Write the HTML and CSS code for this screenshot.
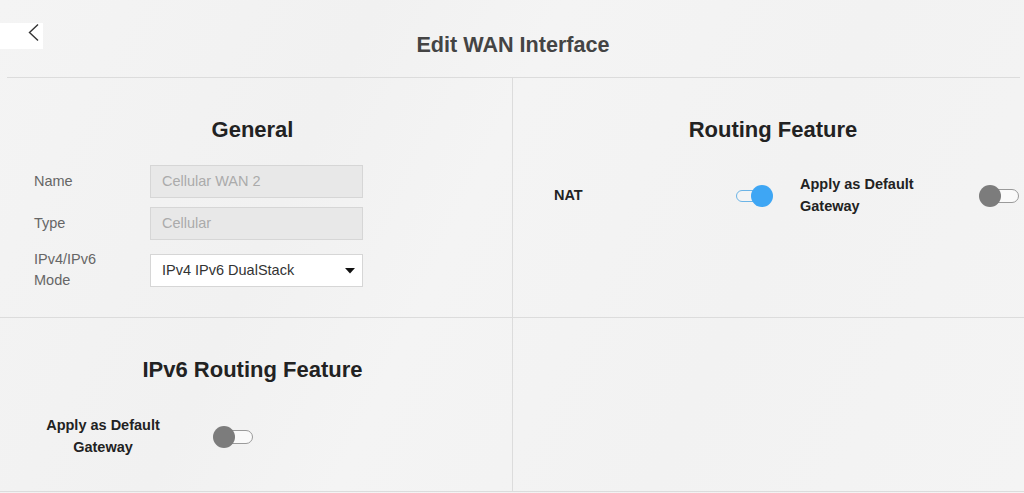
FILE: index.html
```html
<!DOCTYPE html>
<html lang="en">
<head>
<meta charset="utf-8">
<title>Edit WAN Interface</title>
<link rel="stylesheet" href="styles.css">
</head>
<body>
<div class="page">
  <header class="topbar">
    <div class="back">
      <svg width="43" height="26" viewBox="0 0 43 26"><polyline points="38,1.5 29.5,9.5 38,17.5" fill="none" stroke="#333" stroke-width="1.4"/></svg>
    </div>
    <h1 class="title">Edit WAN Interface</h1>
    <div></div>
  </header>
  <div class="rule"></div>
  <main class="panels">
    <section class="cell cell-general">
      <h2 class="heading heading-left">General</h2>
      <div class="form">
        <label class="flabel">Name</label>
        <div class="field disabled">Cellular WAN 2</div>
        <label class="flabel">Type</label>
        <div class="field disabled">Cellular</div>
        <label class="flabel">IPv4/IPv6<br>Mode</label>
        <div class="field select">
          <span>IPv4 IPv6 DualStack</span>
          <svg width="10" height="6" viewBox="0 0 10 6"><polygon points="0,0 10,0 5,5.5" fill="#111"/></svg>
        </div>
      </div>
    </section>
    <section class="cell cell-routing">
      <h2 class="heading heading-right">Routing Feature</h2>
      <div class="route-row">
        <span class="blabel nat">NAT</span>
        <div class="switch on"><span class="track"></span><span class="knob"></span></div>
        <span class="blabel gw">Apply as Default<br>Gateway</span>
        <div class="switch off"><span class="track"></span><span class="knob"></span></div>
      </div>
    </section>
    <section class="cell cell-ipv6">
      <h2 class="heading heading-left">IPv6 Routing Feature</h2>
      <div class="ipv6-row">
        <span class="blabel centered">Apply as Default<br>Gateway</span>
        <div class="switch off"><span class="track"></span><span class="knob"></span></div>
      </div>
    </section>
    <section class="cell cell-empty"></section>
  </main>
</div>
</body>
</html>
```
FILE: styles.css
```css
* { box-sizing: border-box; }
html, body { margin: 0; padding: 0; }
body {
  width: 1024px;
  height: 493px;
  overflow: hidden;
  font-family: "Liberation Sans", Arial, sans-serif;
  background: #f3f3f3;
  color: #222;
}
.page {
  width: 1024px;
  height: 493px;
  background: linear-gradient(115deg, #f4f4f4 0%, #f1f1f1 30%, #f4f4f4 45%, #f2f2f2 70%, #f4f4f4 100%);
}
.topbar {
  height: 77px;
  display: grid;
  grid-template-columns: 1fr auto 1fr;
}
.back {
  width: 43px;
  height: 26px;
  margin-top: 23px;
  background: #fff;
}
.back svg { display: block; }
.title {
  margin: 0;
  padding-top: 33px;
  padding-left: 2px;
  font-size: 21.6px;
  line-height: 24px;
  font-weight: bold;
  color: #444;
}
.rule {
  height: 1px;
  background: #dcdcdc;
  margin: 0 4px 0 7px;
}
.panels {
  display: grid;
  grid-template-columns: 513px 511px;
  grid-template-rows: 240px 174px;
}
.cell {
  border-bottom: 1px solid #dcdcdc;
}
.cell-general, .cell-ipv6 {
  border-right: 1px solid #dcdcdc;
}
.heading {
  margin: 0;
  padding-top: 39px;
  font-size: 22px;
  line-height: 26px;
  font-weight: bold;
  color: #222;
  text-align: center;
}
.heading-left { padding-right: 7px; }
.heading-right { padding-left: 9px; }
.form {
  margin-top: 22px;
  padding-left: 34px;
  display: grid;
  grid-template-columns: 116px 213px;
  row-gap: 9px;
  align-items: center;
}
.flabel {
  font-size: 14.5px;
  line-height: 21px;
  color: #666;
}
.field {
  height: 33px;
  border: 1px solid #d6d6d6;
  font-size: 14.5px;
  line-height: 31px;
  padding-left: 11px;
}
.field.disabled {
  background: #e8e8e8;
  color: #ababab;
}
.field.select {
  background: #fff;
  color: #333;
  display: flex;
  align-items: center;
  justify-content: space-between;
  padding-right: 7px;
}
.field.select svg { display: block; margin-top: 1px; }
.blabel {
  font-size: 14.5px;
  line-height: 22px;
  font-weight: bold;
  color: #222;
}
.route-row {
  margin-top: 30px;
  padding-left: 41px;
  display: flex;
  align-items: center;
}
.nat { width: 182px; }
.gw { width: 179px; margin-left: 27px; }
.ipv6-row {
  margin-top: 31px;
  padding-left: 46px;
  display: flex;
  align-items: center;
}
.centered { width: 114px; text-align: center; margin-right: 53px; }
.switch {
  position: relative;
  width: 40px;
  height: 22px;
  flex: none;
  margin-top: 2px;
}
.switch.on { width: 37px; }
.track {
  position: absolute;
  top: 4px;
  height: 14px;
  width: 34px;
  border-radius: 7px;
  border: 1.5px solid #9a9a9a;
  background: #fafafa;
}
.knob {
  position: absolute;
  top: 0;
  width: 22px;
  height: 22px;
  border-radius: 50%;
  background: #7c7c7c;
}
.switch.off .track { left: 6px; }
.switch.off .knob { left: 0; }
.switch.on .track {
  left: 0;
  top: 5px;
  height: 12px;
  border-color: #6cb4e6;
  background: #f4f4f4;
}
.switch.on .knob {
  left: 15px;
  background: #3ea6f4;
}
```
